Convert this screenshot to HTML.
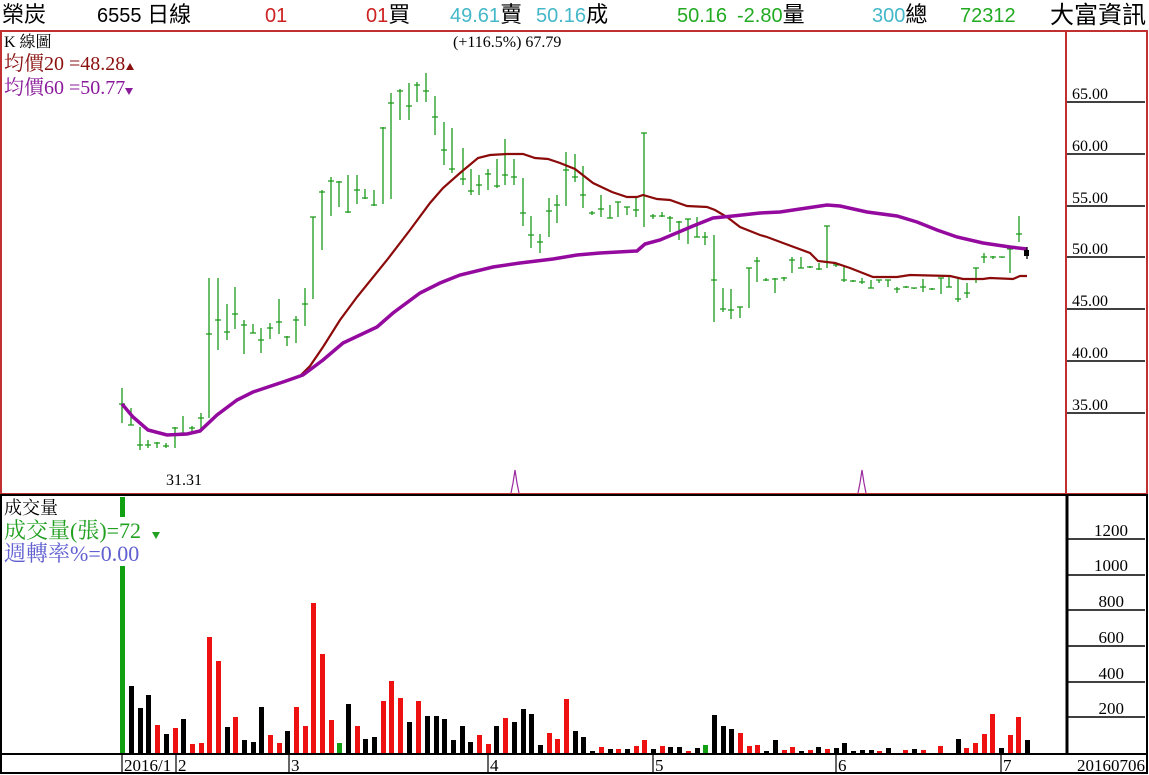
<!DOCTYPE html>
<html><head><meta charset="utf-8">
<style>
html,body{margin:0;padding:0;background:#fff;}
body{width:1149px;height:775px;overflow:hidden;position:relative;font-family:"Liberation Serif","Noto Serif CJK SC","Noto Sans CJK TC",serif;}
svg{position:absolute;left:0;top:0;}
.t{font-family:"Liberation Sans","Noto Sans CJK TC",sans-serif;font-size:20px;}
.s{font-family:"Liberation Serif","Noto Serif CJK SC",serif;font-size:16px;}
</style></head><body>
<svg id="c" width="1149" height="775" viewBox="0 0 1149 775" xmlns="http://www.w3.org/2000/svg">
<rect x="0" y="0" width="1149" height="775" fill="#fff"/>
<text class="t" x="2" y="22" fill="#000" style="font-size:22px">榮炭</text>
<text class="t" x="97" y="22" fill="#000">6555 <tspan style="font-size:22px">日線</tspan></text>
<text class="t" x="265" y="22" fill="#cc2222">01</text>
<text class="t" x="366" y="22" fill="#cc2222">01<tspan fill="#000" style="font-size:22px">買</tspan></text>
<text class="t" x="450" y="22" fill="#44b8c8">49.61<tspan fill="#000" style="font-size:22px">賣</tspan></text>
<text class="t" x="536" y="22" fill="#44b8c8">50.16<tspan fill="#000" style="font-size:22px">成</tspan></text>
<text class="t" x="677" y="22" fill="#22aa22">50.16</text>
<text class="t" x="737" y="22" fill="#22aa22">-2.80<tspan fill="#000" style="font-size:22px">量</tspan></text>
<text class="t" x="872" y="22" fill="#44b8c8">300<tspan fill="#000" style="font-size:22px">總</tspan></text>
<text class="t" x="960" y="22" fill="#22aa22">72312</text>
<text class="t" x="1050" y="23" fill="#000" style="font-size:24px">大富資訊</text>
<rect x="1" y="31" width="1146" height="463" fill="none" stroke="#c03030" stroke-width="2"/>
<line x1="1066" y1="31" x2="1066" y2="494" stroke="#c03030" stroke-width="2"/>
<g stroke="#000" stroke-width="1.5">
<line x1="1067" y1="102" x2="1145" y2="102"/><line x1="1067" y1="154" x2="1145" y2="154"/>
<line x1="1067" y1="206" x2="1145" y2="206"/><line x1="1067" y1="257" x2="1145" y2="257"/>
<line x1="1067" y1="309" x2="1145" y2="309"/><line x1="1067" y1="361" x2="1145" y2="361"/>
<line x1="1067" y1="413" x2="1145" y2="413"/>
</g>
<g class="s" fill="#000">
<text x="1072" y="99">65.00</text><text x="1072" y="151">60.00</text><text x="1072" y="203">55.00</text>
<text x="1072" y="254">50.00</text><text x="1072" y="306">45.00</text><text x="1072" y="358">40.00</text>
<text x="1072" y="410">35.00</text>
</g>
<text class="s" x="4" y="47" fill="#000">K 線圖</text>
<text x="4" y="70" fill="#8b1010" style="font-size:20px">均價20 =48.28</text>
<path d="M126 70 l4 -7 l4 7z" fill="#8b1010"/>
<text x="4" y="94" fill="#8b1a9b" style="font-size:20px">均價60 =50.77</text>
<path d="M125 88 l4 7 l4 -7z" fill="#8b1a9b"/>
<text class="s" x="453" y="47" fill="#000">(+116.5%) 67.79</text>
<text class="s" x="166" y="485" fill="#000">31.31</text>
<path d="M511 493 L513 483 L515 470 L517 483 L519 493" fill="none" stroke="#9b2aa0" stroke-width="1.2"/>
<path d="M858 493 L860 483 L862 470 L864 483 L866 493" fill="none" stroke="#9b2aa0" stroke-width="1.2"/>
<g id="cand" stroke="#1a9a1a" stroke-width="1.3"></g>
<polyline fill="none" stroke="#8b0a0a" stroke-width="2.2" points="300,376 310,366 323,347 340,320 357,297 387,260 410,230 430,203 443,188 460,173 478,158 490,155 507,154 523,154 535,158 548,159 560,163 575,169 593,183 612,192 627,197 637,197 643,195 657,199 670,200 687,206 707,207 715,210 727,217 740,227 760,235 767,237 783,243 810,253 818,261 835,263 850,268 873,277 897,277 910,275 950,276 963,279 983,279 990,278 1013,279 1020,276 1027,276"/>
<polyline fill="none" stroke="#940a9e" stroke-width="3.5" points="122,404 133,417 148,430 167,435 187,434 200,431 217,415 237,400 253,392 283,382 303,375 323,360 343,343 377,327 393,313 420,293 440,283 460,275 493,267 520,263 553,259 577,255 600,253 637,251 645,244 660,240 693,226 713,218 733,216 760,213 780,212 800,209 827,205 840,206 867,212 897,216 917,222 937,230 957,237 983,243 1010,247 1027,249"/>
<rect x="1024" y="250" width="5" height="6" fill="#000"/>
<line x1="1027" y1="247" x2="1027" y2="259" stroke="#000" stroke-width="1.3"/>
<rect x="1" y="495" width="1146" height="259" fill="none" stroke="#000" stroke-width="2"/>
<line x1="1067" y1="495" x2="1067" y2="754" stroke="#000" stroke-width="3"/>
<g stroke="#000" stroke-width="1.5">
<line x1="1068" y1="539" x2="1145" y2="539"/><line x1="1068" y1="575" x2="1145" y2="575"/>
<line x1="1068" y1="610" x2="1145" y2="610"/><line x1="1068" y1="646" x2="1145" y2="646"/>
<line x1="1068" y1="682" x2="1145" y2="682"/><line x1="1068" y1="717" x2="1145" y2="717"/>
</g>
<g class="s" fill="#000" text-anchor="end" style="font-size:17px">
<text x="1128" y="536">1200</text><text x="1128" y="571">1000</text><text x="1124" y="607">800</text>
<text x="1124" y="643">600</text><text x="1124" y="679">400</text><text x="1124" y="714">200</text>
</g>
<g id="vol"></g>
<rect x="118" y="517" width="10" height="49" fill="#fff"/>
<text x="4" y="514" fill="#000" style="font-size:18px">成交量</text>
<text x="4" y="538" fill="#22a022" style="font-size:22px">成交量(張)=72</text>
<path d="M152 532 l4 7 l4 -7z" fill="#22a022"/>
<text x="4" y="561" fill="#6060d0" style="font-size:22px">週轉率%=0.00</text>
<rect x="1" y="754" width="1146" height="19" fill="none" stroke="#000" stroke-width="2"/>
<g stroke="#000" stroke-width="1.2">
<line x1="122" y1="755" x2="122" y2="773"/><line x1="176" y1="755" x2="176" y2="773"/>
<line x1="289" y1="755" x2="289" y2="773"/><line x1="488" y1="755" x2="488" y2="773"/>
<line x1="653" y1="755" x2="653" y2="773"/><line x1="836" y1="755" x2="836" y2="773"/>
<line x1="1001" y1="755" x2="1001" y2="773"/>
</g>
<g class="s" fill="#000" style="font-size:17px">
<text x="124" y="771">2016/1</text><text x="178" y="771">2</text><text x="291" y="771">3</text>
<text x="490" y="771">4</text><text x="655" y="771">5</text><text x="838" y="771">6</text>
<text x="1003" y="771">7</text><text x="1145" y="771" text-anchor="end">20160706</text>
</g>
</svg>
<script>
var NS="http://www.w3.org/2000/svg";
var C=[[122,388,423,404],[131,408,425,425],[140,427,450,445],[148,440,448,445],[157,442,448,443],[166,443,448,446],[175,427,448,428],[183,416,433,433],[192,426,432,428],[201,413,430,418],[209,278,418,334],[218,278,350,320],[227,304,340,332],[235,287,329,314],[244,320,354,325],[253,324,333,333],[261,328,353,340],[270,323,339,328],[279,299,334,322],[287,336,346,337],[296,316,343,320],[305,288,326,304],[313,217,299,217],[322,190,250,192],[331,177,216,181],[339,181,207,182],[348,175,213,212],[357,175,204,190],[365,189,199,198],[374,190,206,205],[383,127,204,128],[391,93,199,103],[400,89,120,91],[409,83,120,106],[417,82,102,85],[426,73,102,91],[435,96,135,117],[444,122,165,150],[452,128,173,169],[463,148,185,179],[471,169,195,191],[479,175,195,185],[488,169,190,174],[497,159,188,186],[505,139,185,175],[514,159,185,177],[523,178,226,213],[531,216,248,235],[540,234,253,242],[549,198,237,211],[557,195,223,205],[566,152,206,170],[575,154,182,177],[583,166,208,195],[592,211,215,213],[601,195,217,209],[610,205,218,218],[618,202,217,202],[627,207,215,207],[636,198,217,210],[644,133,227,133],[653,214,219,216],[662,212,217,216],[670,216,232,218],[679,221,240,222],[688,219,244,219],[697,217,237,237],[705,232,245,237],[714,235,322,280],[723,288,312,309],[731,289,319,310],[740,307,318,307],[749,268,308,268],[757,257,282,261],[766,278,281,280],[775,278,293,279],[784,277,281,278],[792,257,273,260],[801,257,268,268],[810,266,268,267],[819,263,270,269],[827,226,268,226],[836,263,267,265],[844,266,282,280],[853,280,282,281],[862,278,284,282],[871,280,288,288],[879,280,283,280],[888,280,287,280],[897,287,293,289],[906,286,288,287],[914,288,289,288],[923,279,292,287],[932,288,290,289],[941,278,294,278],[949,276,287,287],[958,277,302,299],[967,283,298,293],[976,268,283,268],[984,253,263,257],[993,256,259,257],[1002,257,258,257],[1010,248,273,249],[1019,216,242,234]];
var g=document.getElementById("cand"),d="";
C.forEach(function(c){d+="M"+c[0]+" "+c[1]+"V"+c[2]+"M"+(c[0]-3)+" "+c[3]+"H"+(c[0]+3);});
var p=document.createElementNS(NS,"path");p.setAttribute("d",d);p.setAttribute("fill","none");g.appendChild(p);
var V="122,497,g;131,686,k;140,708,k;148,695,k;157,725,r;166,734,k;175,728,r;183,719,k;192,744,r;201,743,r;209,637,r;218,661,r;227,727,k;235,717,r;244,740,k;253,742,k;261,707,k;270,735,r;279,743,r;287,731,k;296,707,r;305,726,r;313,603,r;322,654,r;331,720,r;339,743,g;348,704,k;357,726,r;365,739,k;374,737,k;383,701,r;391,681,r;400,698,r;409,722,k;418,701,r;427,716,k;436,716,k;444,719,k;453,740,k;462,726,k;470,742,k;479,735,r;488,744,r;496,726,k;505,718,r;514,722,k;523,709,k;531,714,k;540,745,k;549,733,r;557,739,r;566,699,r;575,731,k;583,737,k;592,751,k;601,747,r;610,749,k;618,749,r;627,749,k;636,746,r;644,740,r;653,749,k;662,746,r;670,747,k;679,747,k;688,751,r;697,748,k;705,745,g;714,715,k;723,726,k;731,729,k;740,733,r;749,746,r;757,745,r;766,751,k;775,740,k;784,750,r;792,747,r;801,751,k;810,750,r;818,747,k;827,749,r;836,748,k;844,743,k;853,751,k;862,750,k;871,750,k;879,751,r;888,748,k;905,750,r;914,749,k;923,750,r;940,746,r;958,739,k;966,748,r;975,743,r;984,734,r;992,714,r;1001,748,k;1010,735,r;1018,717,r;1027,740,k";
var col={g:"#11a011",k:"#000",r:"#ee1111"},vg=document.getElementById("vol");
V.split(";").forEach(function(s){var a=s.split(","),x=+a[0],t=+a[1];var r=document.createElementNS(NS,"rect");
r.setAttribute("x",x-2);r.setAttribute("y",t);r.setAttribute("width",5);r.setAttribute("height",753-t);r.setAttribute("fill",col[a[2]]);vg.appendChild(r);});
</script>
</body></html>
